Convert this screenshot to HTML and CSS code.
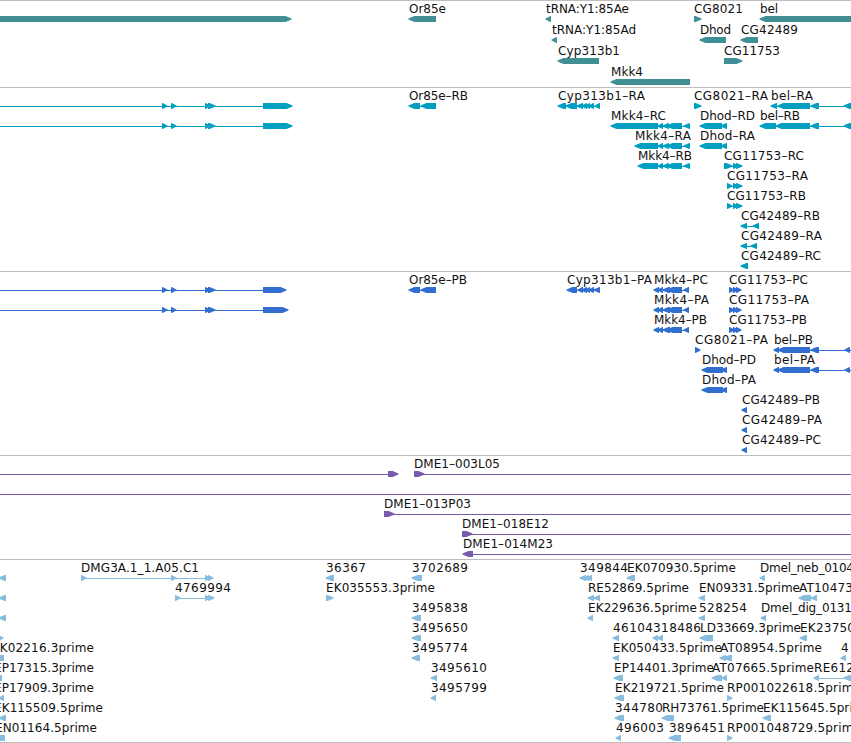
FILE: index.html
```
<!DOCTYPE html>
<html>
<head>
    <meta charset="utf-8">
    <title>Genome Browser</title>
    <link rel="stylesheet" href="styles.css">
</head>
<body>
    <div class="browser">
        <div class="track genes"><svg id="genes"></svg></div>
        <div class="track transcripts"><svg id="transcripts"></svg></div>
        <div class="track proteins"><svg id="proteins"></svg></div>
        <div class="track clones"><svg id="clones"></svg></div>
        <div class="track ests"><svg id="ests"></svg></div>
    </div>
    <script src="script.js"></script>
</body>
</html>
```
FILE: styles.css
```
body {
    margin: 0;
    background-color: #fff;
    font-family: "DejaVu Sans", sans-serif;
    font-size: 12px;
}

.browser {
    display: flex;
    flex-direction: column;
    width: 851px;
    height: 743px;
    box-sizing: border-box;
    border-bottom: 1px solid #bebebe;
    overflow: hidden;
}

.track {
    box-sizing: border-box;
    border-top: 1px solid #bebebe;
    overflow: hidden;
}

.track svg {
    display: block;
    width: 100%;
    height: 100%;
}

.track text {
    fill: #111;
}

.genes {
    height: 87px;
    color: #3f8f94;
}

.transcripts {
    height: 184px;
    color: #009fc1;
}

.proteins {
    height: 184px;
    color: #326ecf;
}

.clones {
    height: 104px;
    color: #7a5aaa;
}

.ests {
    height: 183px;
    color: #87bcde;
}

.exon {
    fill: currentColor;
}

.intron {
    fill: currentColor;
    shape-rendering: crispEdges;
}
```
FILE: script.js
```
var NS = 'http://www.w3.org/2000/svg';

// feature: [row, direction, exons, label, label start, label end, line start, line end]
var mkk4 = [[658, 663], [663, 669], [667, 682], [684, 690]];
var geneExons = [[162, 167], [171, 176], [205, 210], [208, 215]];

var genes = [
    [0, '>', [[-10, 291]]],
    [0, '<', [[409, 436]], 'Or85e', 409, 446],
    [0, '<', [[546, 551]], 'tRNA:Y1:85Ae', 546, 629],
    [0, '>', [[694, 701]], 'CG8021', 694, 743],
    [0, '<', [[760, 870]], 'bel', 760, 778],
    [1, '<', [[552, 557]], 'tRNA:Y1:85Ad', 552, 636],
    [1, '<', [[700, 726]], 'Dhod', 700, 731],
    [1, '<', [[741, 758]], 'CG42489', 741, 798],
    [2, '<', [[558, 599]], 'Cyp313b1', 558, 620],
    [2, '>', [[724, 742]], 'CG11753', 724, 780],
    [3, '<', [[611, 690]], 'Mkk4', 611, 643]
];

var transcripts = [
    [0, '>', geneExons.concat([[263, 292]]), '', 0, 0, 0, 290],
    [1, '>', geneExons.concat([[263, 292]]), '', 0, 0, 0, 290],
    [0, '<', [[409, 420], [421, 436]], 'Or85e-RB', 409, 468],
    [0, '<', [[558, 566], [566, 577], [577, 583], [582, 587], [586, 590], [589, 594], [595, 600]], 'Cyp313b1-RA', 558, 645],
    [0, '>', [[694, 701]], 'CG8021-RA', 694, 768],
    [0, '<', [[771, 777], [778, 810], [811, 819], [844, 860]], 'bel-RA', 771, 813],
    [1, '<', [[611, 658]].concat(mkk4), 'Mkk4-RC', 611, 666],
    [1, '<', [[700, 722], [721, 727]], 'Dhod-RD', 700, 755],
    [1, '<', [[760, 776], [776, 810], [811, 819], [844, 860]], 'bel-RB', 760, 800],
    [2, '<', [[635, 658]].concat(mkk4), 'Mkk4-RA', 635, 691],
    [2, '<', [[700, 722], [721, 727]], 'Dhod-RA', 700, 755],
    [3, '<', [[638, 658]].concat(mkk4), 'Mkk4-RB', 638, 692],
    [3, '>', [[724, 732], [733, 738], [736, 742]], 'CG11753-RC', 724, 804],
    [4, '>', [[727, 732], [733, 738], [736, 742]], 'CG11753-RA', 727, 808],
    [5, '>', [[727, 732], [733, 738], [736, 742]], 'CG11753-RB', 727, 806],
    [6, '<', [[741, 747], [753, 759]], 'CG42489-RB', 741, 820],
    [7, '<', [[741, 747], [751, 757]], 'CG42489-RA', 741, 822],
    [8, '<', [[741, 748]], 'CG42489-RC', 741, 821]
];

var mkk4P = [[654, 659], [658, 663], [663, 670], [667, 682], [684, 689]];
var cypP = [[567, 577], [578, 583], [582, 587], [586, 590], [589, 594], [594, 600]];
var cg117P = [[729, 734], [733, 738], [736, 741]];
var belP = [[774, 779], [778, 810], [811, 819], [845, 850]];

var proteins = [
    [0, '>', geneExons.concat([[263, 286]]), '', 0, 0, 0, 285],
    [1, '>', geneExons.concat([[263, 288]]), '', 0, 0, 0, 287],
    [0, '<', [[409, 420], [421, 436]], 'Or85e-PB', 409, 467],
    [0, '<', cypP, 'Cyp313b1-PA', 567, 652],
    [0, '<', mkk4P, 'Mkk4-PC', 654, 708],
    [1, '<', mkk4P, 'Mkk4-PA', 654, 709],
    [2, '<', mkk4P, 'Mkk4-PB', 654, 707],
    [0, '>', cg117P, 'CG11753-PC', 729, 808],
    [1, '>', cg117P, 'CG11753-PA', 729, 809],
    [2, '>', cg117P, 'CG11753-PB', 729, 807],
    [3, '>', [[695, 700]], 'CG8021-PA', 695, 768],
    [3, '<', belP, 'bel-PB', 774, 813, 774, 851],
    [4, '<', [[702, 723], [721, 727]], 'Dhod-PD', 702, 756],
    [4, '<', belP, 'bel-PA', 774, 815, 774, 851],
    [5, '<', [[702, 723], [721, 727]], 'Dhod-PA', 702, 756],
    [6, '<', [[742, 747]], 'CG42489-PB', 742, 820],
    [7, '<', [[742, 747]], 'CG42489-PA', 742, 822],
    [8, '<', [[742, 747]], 'CG42489-PC', 742, 821]
];

var clones = [
    [0, '>', [[388, 398]], '', 0, 0, 0, 396],
    [0, '>', [[414, 424]], 'DME1-003L05', 414, 500, 414, 851],
    [1, '>', [], '', 0, 0, 0, 851],
    [2, '>', [[384, 394]], 'DME1-013P03', 384, 471, 384, 851],
    [3, '>', [[462, 472]], 'DME1-018E12', 462, 549, 462, 851],
    [4, '<', [[463, 473]], 'DME1-014M23', 463, 553, 466, 851]
];

var ests = [
    // features running in from the left edge
    [0, '<', [[-1, 6]]],
    [1, '<', [[-1, 6]]],
    [2, '<', [[-1, 6]]],
    [3, '>', [[-2, 3]]],
    [4, '<', [[-8, 4]], 'EK02216.3prime', -8, 94],
    [5, '<', [[-8, 2]], 'EP17315.3prime', -6, 94],
    [6, '<', [[-1, 4]], 'EP17909.3prime', -6, 94],
    [7, '<', [[-1, 6]], 'EK115509.5prime', -6, 103],
    [8, '<', [[-8, 5]], 'EN01164.5prime', -5, 97],

    [0, '>', [[81, 86], [171, 176], [205, 210], [208, 213]], 'DMG3A.1_1.A05.C1', 81, 199],
    [1, '>', [[175, 180], [205, 210], [208, 214]], '4769994', 175, 231],
    [0, '<', [[326, 334]], '36367', 326, 366],
    [1, '>', [[326, 333]], 'EK035553.3prime', 326, 435],
    [0, '<', [[412, 422]], '3702689', 412, 468],
    [2, '<', [[412, 421]], '3495838', 412, 468],
    [3, '<', [[412, 421]], '3495650', 412, 468],
    [4, '<', [[412, 420]], '3495774', 412, 468],
    [5, '<', [[431, 437]], '3495610', 431, 487],
    [6, '<', [[431, 436]], '3495799', 431, 487],

    [0, '<', [[580, 586], [584, 589], [587, 592]], '349844', 580, 628],
    [0, '<', [[627, 635]], 'EK070930.5prime', 627, 736],
    [0, '<', [[760, 765]], 'Dmel_neb_0104', 760, 854],
    [1, '<', [[588, 594], [594, 600]], 'RE52869.5prime', 588, 689],
    [1, '<', [[699, 705]], 'EN09331.5prime', 699, 800],
    [1, '<', [[799, 811], [811, 817]], 'AT10473', 799, 853],
    [2, '<', [[588, 593]], 'EK229636.5prime', 588, 697],
    [2, '<', [[699, 705]], '528254', 699, 747],
    [2, '<', [[761, 766]], 'Dmel_dig_0131', 761, 852],
    [3, '<', [[613, 619]], '46104', 613, 653],
    [3, '<', [[653, 658], [657, 663]], '318486', 653, 701],
    [3, '<', [[700, 713]], 'LD33669.3prime', 700, 801],
    [3, '<', [[800, 807]], 'EK23750', 800, 855],
    [4, '<', [[613, 619]], 'EK050433.5prime', 613, 722],
    [4, '<', [[720, 726], [724, 732]], 'AT08954.5prime', 720, 822],
    [4, '<', [[841, 846]], '4', 841, 849],
    [5, '<', [[614, 623]], 'EP14401.3prime', 614, 714],
    [5, '<', [[712, 722], [722, 727]], 'AT07665.5prime', 712, 814],
    [5, '<', [[814, 819], [844, 860]], 'RE612', 814, 854],
    [6, '<', [[615, 624]], 'EK219721.5prime', 615, 724],
    [6, '>', [[727, 732]], 'RP001022618.5prime', 727, 861],
    [7, '<', [[615, 624]], '344780', 615, 663],
    [7, '<', [[662, 674]], 'RH73761.5prime', 662, 764],
    [7, '<', [[763, 771]], 'EK115645.5prime', 763, 872],
    [8, '<', [[616, 621]], '496003', 616, 664],
    [8, '<', [[669, 681]], '3896451', 669, 725],
    [8, '>', [[727, 732]], 'RP001048729.5prime', 727, 861]
];

function add(svg, tag, attrs) {
    var el = document.createElementNS(NS, tag);
    for (var key in attrs) {
        el.setAttribute(key, attrs[key]);
    }
    svg.appendChild(el);
    return el;
}

// s is the side the head points to, 1 for right and -1 for left
function drawExon(svg, x1, x2, y, dir) {
    var s = dir === '>' ? 1 : -1;
    var tip = dir === '>' ? x2 : x1;
    var tail = dir === '>' ? x1 : x2;
    var head = Math.min(x2 - x1, 6);
    var neck = tip - s * (head - 0.5);
    var bend = tip - s * head * 0.4;
    var points = [
        [tail, y], [neck, y], [bend, y + 1.3], [tip + s * 0.5, y + 2.5],
        [tip + s * 0.5, y + 3.5], [bend, y + 4.7], [neck, y + 6], [tail, y + 6]
    ];
    add(svg, 'polygon', { 'class': 'exon', points: points.join(' ') });
}

function drawTrack(id, features, rowHeight) {
    var svg = document.getElementById(id);
    features.forEach(function (f) {
        var top = f[0] * rowHeight;
        var exons = f[2];
        var start = f[6], end = f[7];
        if (start === undefined && exons.length > 1) {
            start = exons[0][0] + 2;
            end = exons[exons.length - 1][1] - 2;
        }
        if (start !== undefined) {
            add(svg, 'rect', { 'class': 'intron', x: start, y: top + 18, width: end - start, height: 1 });
        }
        exons.forEach(function (e) {
            drawExon(svg, e[0], e[1], top + 15, f[1]);
        });
        if (f[3]) {
            var text = add(svg, 'text', { x: f[4], y: top + 12, textLength: f[5] - f[4] });
            // the labels use a long dash
            text.textContent = f[3].replace('-', '\u2013');
        }
    });
}

drawTrack('genes', genes, 21);
drawTrack('transcripts', transcripts, 20);
drawTrack('proteins', proteins, 20);
drawTrack('clones', clones, 20);
drawTrack('ests', ests, 20);
```
